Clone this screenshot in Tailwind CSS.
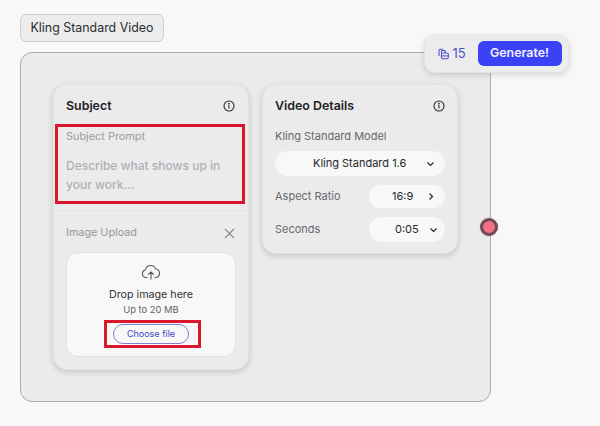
<!DOCTYPE html>
<html lang="en">
<head>
  <meta charset="UTF-8">
  <meta name="viewport" content="width=device-width, initial-scale=1.0">
  <title>Kling Standard Video</title>
  <script src="https://cdn.jsdelivr.net/npm/@tailwindcss/browser@4"></script>
</head>
<body class="bg-[#f8f8f8] h-[426px] w-[600px] overflow-hidden font-['Inter',sans-serif] text-[#24262a]">
  <div class="pt-[14px] pl-[20px] w-[491px]">
    <!-- Node label -->
    <div class="w-[144px] h-[28px] flex items-center justify-center bg-[#ececec] border border-[#c9ccd1] rounded-[6px] text-[12.4px] text-[#2b2d31]">Kling Standard Video</div>

    <!-- Node canvas -->
    <div class="relative mt-[10px] h-[350px] bg-[#ebebeb] border-[1.5px] border-[#a9adb5] rounded-[12px] pt-[31px] pl-[32px] flex items-start gap-[13px]">

      <!-- Subject card -->
      <div class="w-[196px] h-[286px] bg-[#ebebeb] rounded-[14px] border border-[#e3e3e3] shadow-[0_2px_6px_rgba(0,0,0,0.16)] flex flex-col">
        <div class="h-[39px] pl-[12px] pr-[13px] pt-[3px] flex items-center justify-between">
          <span class="text-[12.4px] font-semibold text-[#1f2124]">Subject</span>
          <svg width="12" height="12" viewBox="0 0 12 12" fill="none" stroke="#2b2d31" stroke-width="1.1"><circle cx="6" cy="6" r="5"/><path d="M6 5.4V8.6M5.2 5.4H6" /><circle cx="6" cy="3.6" r=".35" fill="#2b2d31"/></svg>
        </div>
        <div class="ml-[1px] w-[190px] h-[80px] border-[3px] border-[#d9182b] pl-[8px] pt-[1px]">
          <div class="text-[10.9px] leading-[16px] text-[#9a9da3]">Subject Prompt</div>
          <div class="mt-[12px] text-[12px] font-medium leading-[19px] text-[#aeb1b7]">Describe what shows up in<br>your work...</div>
        </div>
        <div class="mt-[6px] border-t border-[#e2e2e2] px-[12px] pt-[14px]">
          <div class="flex items-center justify-between">
            <span class="text-[10.8px] leading-[16px] text-[#94979d]">Image Upload</span>
            <svg class="mr-[1px]" width="11" height="11" viewBox="0 0 11 11" fill="none" stroke="#85888d" stroke-width="1.1"><path d="M1 1L10 10M10 1L1 10"/></svg>
          </div>
          <div class="mt-[11px] h-[105px] bg-[#f8f8f8] border border-[#e2e2e2] rounded-[12px] flex flex-col items-center pt-[11px]">
            <svg width="20" height="16" viewBox="0 0 20 16" fill="none" stroke="#55585d" stroke-width="1.1" stroke-linecap="round" stroke-linejoin="round"><path d="M6 13.5H5a3.8 3.8 0 0 1-.6-7.5A5.3 5.3 0 0 1 14.6 5 4.3 4.3 0 0 1 15 13.5h-1"/><path d="M10 15V8M7.4 10.4 10 7.8l2.6 2.6"/></svg>
            <div class="mt-[7px] text-[10.7px] leading-[16px] text-[#303236]">Drop image here</div>
            <div class="text-[9.4px] leading-[13px] text-[#5f6267]">Up to 20 MB</div>
            <div class="mt-[4px] ml-[3px] w-[97px] h-[28px] border-[3px] border-[#d9182b] flex items-center pl-[6px]">
              <div class="w-[76px] h-[20px] border border-[#7f7fd0] rounded-full flex items-center justify-center text-[9px] text-[#4346c4]">Choose file</div>
            </div>
          </div>
        </div>
      </div>

      <!-- Video details card -->
      <div class="w-[196px] h-[170px] bg-[#ebebeb] rounded-[14px] border border-[#e3e3e3] shadow-[0_2px_6px_rgba(0,0,0,0.16)] px-[12px]">
        <div class="h-[39px] pt-[3px] flex items-center justify-between">
          <span class="text-[12.4px] font-semibold text-[#1f2124]">Video Details</span>
          <svg width="12" height="12" viewBox="0 0 12 12" fill="none" stroke="#2b2d31" stroke-width="1.1"><circle cx="6" cy="6" r="5"/><path d="M6 5.4V8.6M5.2 5.4H6" /><circle cx="6" cy="3.6" r=".35" fill="#2b2d31"/></svg>
        </div>
        <div class="mt-[4px] text-[11px] leading-[16px] text-[#66696e]">Kling Standard Model</div>
        <div class="mt-[7px] h-[25px] bg-[#f8f8f8] rounded-full flex items-center pl-[38px] pr-[10px] justify-between text-[11px] text-[#26282c]">
          <span>Kling Standard 1.6</span>
          <svg width="9" height="6" viewBox="0 0 9 6" fill="none" stroke="#26282c" stroke-width="1.2"><path d="M1.5 1.5 4.5 4.5 7.5 1.5"/></svg>
        </div>
        <div class="mt-[9px] flex items-center justify-between">
          <span class="text-[11px] text-[#66696e]">Aspect Ratio</span>
          <div class="w-[76px] h-[23px] bg-[#f8f8f8] rounded-full flex items-center justify-between pl-[23px] pr-[11px] text-[11px] text-[#26282c]">
            <span>16:9</span>
            <svg width="6" height="9" viewBox="0 0 6 9" fill="none" stroke="#26282c" stroke-width="1.2"><path d="M1.5 1.5 4.5 4.5 1.5 7.5"/></svg>
          </div>
        </div>
        <div class="mt-[9px] flex items-center justify-between">
          <span class="text-[11px] text-[#66696e]">Seconds</span>
          <div class="w-[76px] h-[25px] bg-[#f8f8f8] rounded-full flex items-center justify-between pl-[26px] pr-[7px] text-[11px] text-[#26282c]">
            <span>0:05</span>
            <svg width="9" height="6" viewBox="0 0 9 6" fill="none" stroke="#26282c" stroke-width="1.2"><path d="M1.5 1.5 4.5 4.5 7.5 1.5"/></svg>
          </div>
        </div>
      </div>

      <!-- Floating generate bar -->
      <div class="absolute left-[402.5px] top-[-18.5px] w-[145px] h-[38px] bg-[#ececee] rounded-[10px] border border-[#e4e4e6] shadow-[0_2px_6px_rgba(0,0,0,0.14)] flex items-center justify-between pl-[13px] pr-[6px]">
        <div class="flex items-center gap-[4px] text-[13px] text-[#4f55c8]">
          <svg width="11" height="12" viewBox="0 0 11 12" fill="none" stroke="#4f55c8" stroke-width="1.1"><path d="M5 1.2H2.4A1.4 1.4 0 0 0 1 2.6V8"/><path d="M3.4 5V3.6A1.2 1.2 0 0 1 4.6 2.4H6A1.2 1.2 0 0 1 7.2 3.6V5"/><rect x="3.4" y="5" width="7" height="5.8" rx="1.8"/><path d="M3.4 7.9H10.4"/></svg>
          <span>15</span>
        </div>
        <div class="w-[84px] h-[25px] bg-[#3b41f5] rounded-[6px] flex items-center justify-center text-[12.4px] font-semibold text-[#f2f2ff]">Generate!</div>
      </div>

      <!-- Output handle -->
      <div class="absolute left-[458.5px] top-[164.5px] w-[18px] h-[18px] rounded-full bg-[#f56f86] border-[3px] border-[#6b4b55] shadow-[0_0_2px_rgba(240,102,127,0.5)]"></div>
    </div>
  </div>
</body>
</html>
